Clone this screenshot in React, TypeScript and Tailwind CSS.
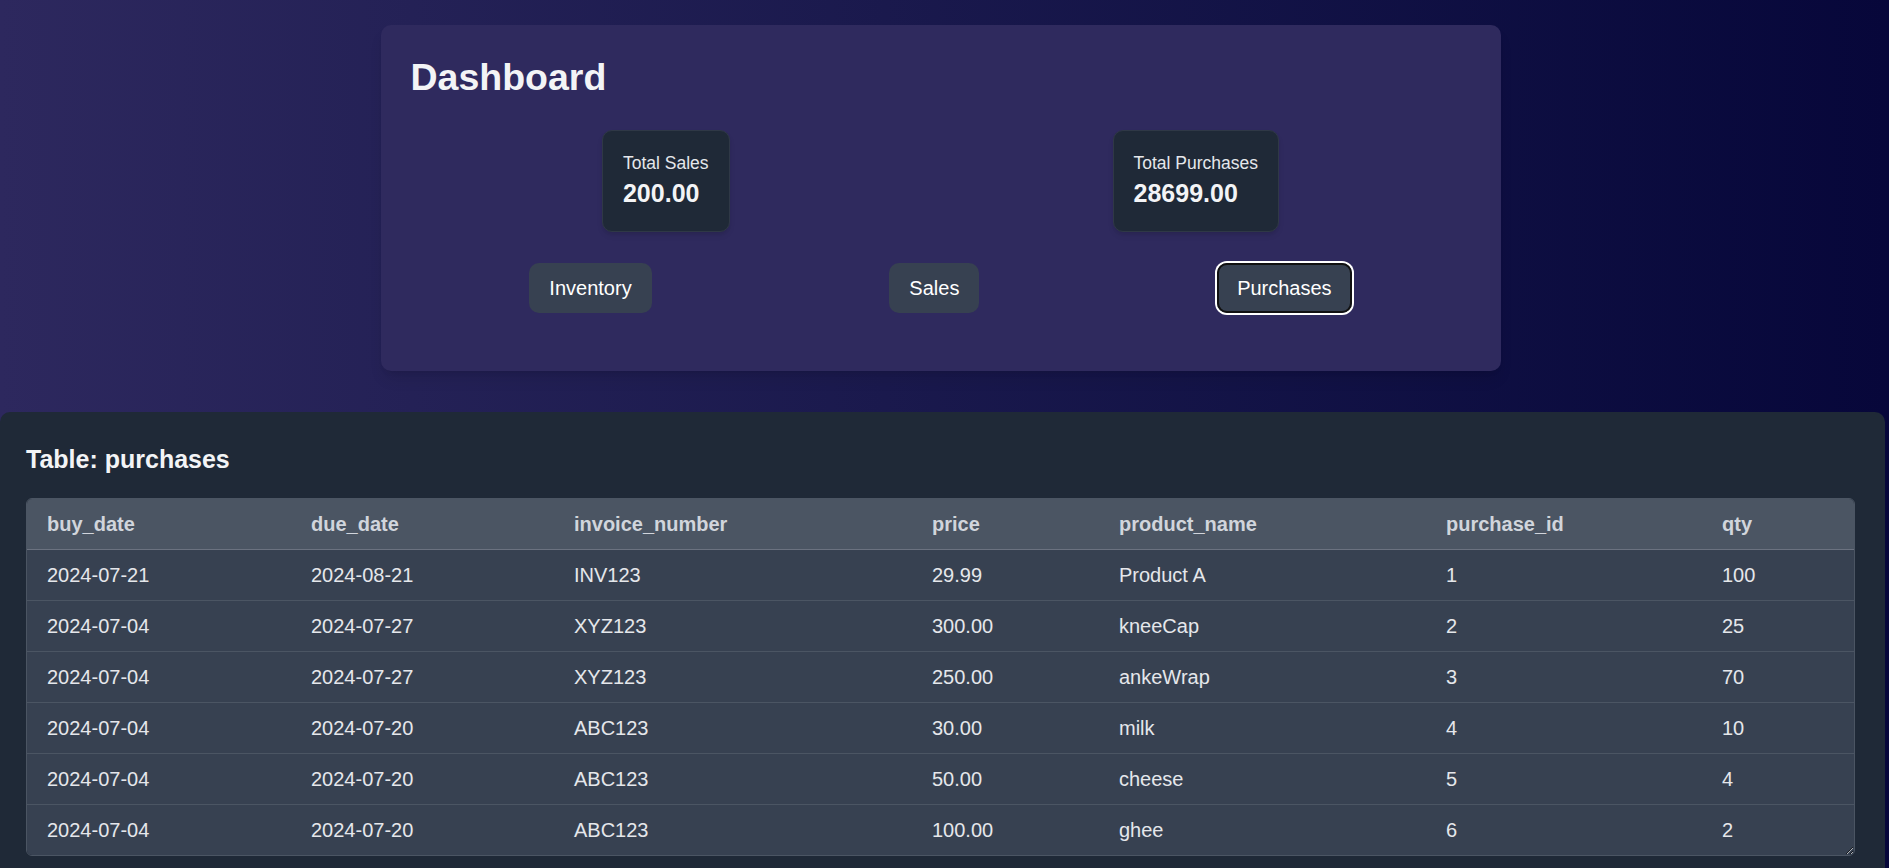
const ROWS = [
  ["2024-07-21", "2024-08-21", "INV123", "29.99", "Product A", "1", "100"],
  ["2024-07-04", "2024-07-27", "XYZ123", "300.00", "kneeCap", "2", "25"],
  ["2024-07-04", "2024-07-27", "XYZ123", "250.00", "ankeWrap", "3", "70"],
  ["2024-07-04", "2024-07-20", "ABC123", "30.00", "milk", "4", "10"],
  ["2024-07-04", "2024-07-20", "ABC123", "50.00", "cheese", "5", "4"],
  ["2024-07-04", "2024-07-20", "ABC123", "100.00", "ghee", "6", "2"],
];

const COLUMNS = [
  { key: "buy_date", w: "w-[264px]" },
  { key: "due_date", w: "w-[263px]" },
  { key: "invoice_number", w: "w-[358px]" },
  { key: "price", w: "w-[187px]" },
  { key: "product_name", w: "w-[327px]" },
  { key: "purchase_id", w: "w-[276px]" },
  { key: "qty", w: "" },
];

function StatCard({ label, value }: { label: string; value: string }) {
  return (
    <div className="rounded-[10px] border border-[#2f3846] bg-[#1f2937] p-5 shadow-md">
      <p className="text-[17.5px] leading-[25px] text-gray-200">{label}</p>
      <p className="text-[25px] font-bold leading-[35px] text-gray-100">{value}</p>
    </div>
  );
}

function NavButton({ label, active }: { label: string; active?: boolean }) {
  return (
    <button
      className={
        active
          ? "rounded-[10px] bg-[#374151] px-5 py-[10px] text-[20px] leading-[30px] text-white shadow-[0_0_0_2px_#fff,inset_0_0_0_2px_#111]"
          : "rounded-[10px] bg-[#374151] px-5 py-[10px] text-[20px] leading-[30px] text-white"
      }
    >
      {label}
    </button>
  );
}

export default function App() {
  return (
    <div className="min-h-screen bg-gradient-to-r from-[#2d285e] to-[#07073a] pt-[25px] font-['Liberation_Sans',Arial,sans-serif]">
      <div className="pr-[8px]">
        <div className="mx-auto w-[1120px] rounded-[10px] bg-[#2f2a5e] px-[30px] pt-[30px] pb-[58px] shadow-lg">
          <h1 className="mb-[30px] text-[37.5px] font-bold leading-[45px] text-gray-100">Dashboard</h1>
          <div className="flex justify-around">
            <StatCard label="Total Sales" value="200.00" />
            <StatCard label="Total Purchases" value="28699.00" />
          </div>
          <div className="mt-[31px] flex justify-around">
            <NavButton label="Inventory" />
            <NavButton label="Sales" />
            <NavButton label="Purchases" active />
          </div>
        </div>
      </div>

      <div className="mt-[41px] w-[1885px] rounded-[10px] bg-[#1f2937] pt-[30px] pr-[30px] pb-[26px] pl-[26px]">
        <h2 className="mb-[21px] text-[25px] font-bold leading-[35px] text-gray-100">Table: purchases</h2>
        <div className="resize overflow-auto rounded-[6px] border border-[#4b5563]">
          <table className="w-full table-fixed border-collapse text-left text-[20px] leading-[30px]">
            <thead>
              <tr className="border-b border-[#6b7280] bg-[#4b5563]">
                {COLUMNS.map((c) => (
                  <th key={c.key} className={`${c.w} px-5 py-[10px] font-bold text-gray-300`}>
                    {c.key}
                  </th>
                ))}
              </tr>
            </thead>
            <tbody>
              {ROWS.map((row, i) => (
                <tr key={i} className="border-b border-[#4b5563] bg-[#374151] last:border-b-0">
                  {row.map((cell, j) => (
                    <td key={j} className="px-5 py-[10px] text-gray-200">
                      {cell}
                    </td>
                  ))}
                </tr>
              ))}
            </tbody>
          </table>
        </div>
      </div>
    </div>
  );
}
